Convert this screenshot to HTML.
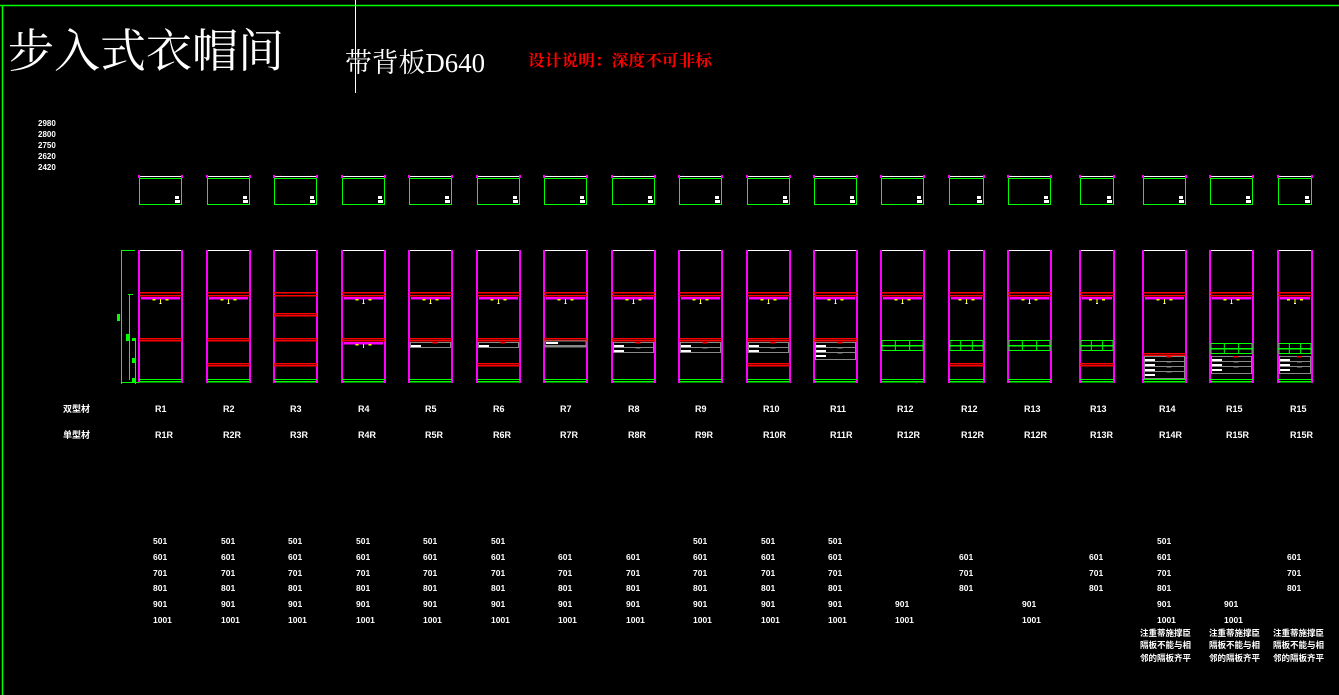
<!DOCTYPE html>
<html><head><meta charset="utf-8">
<style>
html,body{margin:0;padding:0;background:#000;width:1339px;height:695px;overflow:hidden}
svg{display:block}
.t{fill:#fff;font-family:"Liberation Sans","Noto Sans CJK SC",sans-serif;font-size:9px;font-weight:bold}
</style></head><body>
<svg id="s" width="1339" height="695" xmlns="http://www.w3.org/2000/svg">
<rect width="1339" height="695" fill="#000"/>
<line x1="0" y1="5.5" x2="1339" y2="5.5" stroke="#0f0" stroke-width="1.5"/>
<line x1="2.5" y1="5" x2="2.5" y2="695" stroke="#0f0" stroke-width="1.5"/>
<line x1="355.5" y1="0" x2="355.5" y2="93" stroke="#fff" stroke-width="1"/>
<text x="8" y="67" fill="#fff" font-family="'Noto Serif CJK SC',serif" font-size="46" textLength="276" lengthAdjust="spacingAndGlyphs">步入式衣帽间</text>
<text x="345" y="72" fill="#fff" font-family="'Liberation Serif','Noto Serif CJK SC',serif" font-size="27" textLength="140" lengthAdjust="spacingAndGlyphs">带背板D640</text>
<text x="528" y="66" fill="#f00" font-family="'Liberation Serif','Noto Serif CJK SC',serif" font-size="16" font-weight="bold" textLength="184" lengthAdjust="spacingAndGlyphs">设计说明：深度不可非标</text>
<g class="t" style="font-size:8px">
<text x="38" y="126">2980</text><text x="38" y="137">2800</text><text x="38" y="148">2750</text><text x="38" y="159">2620</text><text x="38" y="170">2420</text>
</g>
<g id="g"></g>
<g class="t">
<text x="63" y="412">双型材</text><text x="63" y="438">单型材</text>
<text x="155" y="412">R1</text><text x="223" y="412">R2</text><text x="290" y="412">R3</text><text x="358" y="412">R4</text><text x="425" y="412">R5</text><text x="493" y="412">R6</text><text x="560" y="412">R7</text><text x="628" y="412">R8</text><text x="695" y="412">R9</text><text x="763" y="412">R10</text><text x="830" y="412">R11</text><text x="897" y="412">R12</text><text x="961" y="412">R12</text><text x="1024" y="412">R13</text><text x="1090" y="412">R13</text><text x="1159" y="412">R14</text><text x="1226" y="412">R15</text><text x="1290" y="412">R15</text>
<text x="155" y="438">R1R</text><text x="223" y="438">R2R</text><text x="290" y="438">R3R</text><text x="358" y="438">R4R</text><text x="425" y="438">R5R</text><text x="493" y="438">R6R</text><text x="560" y="438">R7R</text><text x="628" y="438">R8R</text><text x="695" y="438">R9R</text><text x="763" y="438">R10R</text><text x="830" y="438">R11R</text><text x="897" y="438">R12R</text><text x="961" y="438">R12R</text><text x="1024" y="438">R12R</text><text x="1090" y="438">R13R</text><text x="1159" y="438">R14R</text><text x="1226" y="438">R15R</text><text x="1290" y="438">R15R</text>
</g>
<g class="t" style="font-size:8.5px">
<text x="153" y="544">501</text><text x="153" y="560">601</text><text x="153" y="576">701</text><text x="153" y="591">801</text><text x="153" y="607">901</text><text x="153" y="623">1001</text>
<text x="221" y="544">501</text><text x="221" y="560">601</text><text x="221" y="576">701</text><text x="221" y="591">801</text><text x="221" y="607">901</text><text x="221" y="623">1001</text>
<text x="288" y="544">501</text><text x="288" y="560">601</text><text x="288" y="576">701</text><text x="288" y="591">801</text><text x="288" y="607">901</text><text x="288" y="623">1001</text>
<text x="356" y="544">501</text><text x="356" y="560">601</text><text x="356" y="576">701</text><text x="356" y="591">801</text><text x="356" y="607">901</text><text x="356" y="623">1001</text>
<text x="423" y="544">501</text><text x="423" y="560">601</text><text x="423" y="576">701</text><text x="423" y="591">801</text><text x="423" y="607">901</text><text x="423" y="623">1001</text>
<text x="491" y="544">501</text><text x="491" y="560">601</text><text x="491" y="576">701</text><text x="491" y="591">801</text><text x="491" y="607">901</text><text x="491" y="623">1001</text>
<text x="558" y="560">601</text><text x="558" y="576">701</text><text x="558" y="591">801</text><text x="558" y="607">901</text><text x="558" y="623">1001</text>
<text x="626" y="560">601</text><text x="626" y="576">701</text><text x="626" y="591">801</text><text x="626" y="607">901</text><text x="626" y="623">1001</text>
<text x="693" y="544">501</text><text x="693" y="560">601</text><text x="693" y="576">701</text><text x="693" y="591">801</text><text x="693" y="607">901</text><text x="693" y="623">1001</text>
<text x="761" y="544">501</text><text x="761" y="560">601</text><text x="761" y="576">701</text><text x="761" y="591">801</text><text x="761" y="607">901</text><text x="761" y="623">1001</text>
<text x="828" y="544">501</text><text x="828" y="560">601</text><text x="828" y="576">701</text><text x="828" y="591">801</text><text x="828" y="607">901</text><text x="828" y="623">1001</text>
<text x="895" y="607">901</text><text x="895" y="623">1001</text>
<text x="959" y="560">601</text><text x="959" y="576">701</text><text x="959" y="591">801</text>
<text x="1022" y="607">901</text><text x="1022" y="623">1001</text>
<text x="1089" y="560">601</text><text x="1089" y="576">701</text><text x="1089" y="591">801</text>
<text x="1157" y="544">501</text><text x="1157" y="560">601</text><text x="1157" y="576">701</text><text x="1157" y="591">801</text><text x="1157" y="607">901</text><text x="1157" y="623">1001</text>
<text x="1224" y="607">901</text><text x="1224" y="623">1001</text>
<text x="1287" y="560">601</text><text x="1287" y="576">701</text><text x="1287" y="591">801</text>
</g>
<g class="t" style="font-size:8.5px">
<text x="1140" y="636">注重蒂施撑臣</text><text x="1140" y="648">隔板不能与相</text><text x="1140" y="661">邻的隔板齐平</text>
<text x="1209" y="636">注重蒂施撑臣</text><text x="1209" y="648">隔板不能与相</text><text x="1209" y="661">邻的隔板齐平</text>
<text x="1273" y="636">注重蒂施撑臣</text><text x="1273" y="648">隔板不能与相</text><text x="1273" y="661">邻的隔板齐平</text>
</g>
</svg>
<script>
var g=document.getElementById('g'),o='';
function L(x1,y1,x2,y2,c,w){o+='<line x1="'+x1+'" y1="'+y1+'" x2="'+x2+'" y2="'+y2+'" stroke="'+c+'" stroke-width="'+(w||1)+'"/>';}
function R(x,y,w,h,c){o+='<rect x="'+x+'" y="'+y+'" width="'+w+'" height="'+h+'" fill="'+c+'"/>';}
var cols=[[139,182],[207,250],[274,317],[342,385],[409,452],[477,520],[544,587],[612,655],[679,722],[747,790],[814,857],[881,924],[949,984],[1008,1051],[1080,1114],[1143,1186],[1210,1253],[1278,1312]];
var spec=[
{s:[339]},{s:[339,364]},{nohang:1,s:[314,339,364]},{s:[339],h2:1},
{s:[339],d:[342,1]},{s:[339,364],d:[342,1]},{s:[339],w7:1},{s:[339],d:[342,2]},
{s:[339],d:[342,2]},{s:[339,364],d:[342,2]},{s:[339],d:[342,3]},
{s:[],gr:340},{s:[364],gr:340},{s:[],gr:340},{s:[364],gr:340},
{s:[354],d:[356,4]},{s:[],gr:343,d:[356,3]},{s:[],gr:343,d:[356,3]}];
cols.forEach(function(c,i){
 var a=c[0],b=c[1],w=b-a,sp=spec[i];
 R(a,176,w,1,'#fff');R(a-1,175,2,3,'#f0f');R(b-1,175,2,3,'#f0f');
 o+='<rect x="'+(a+0.5)+'" y="178.5" width="'+(w-1)+'" height="26" fill="none" stroke="#0f0"/>';
 R(b-7,196,4,3,'#fff');R(b-7,200,5,3,'#fff');
 R(a,250,w,1,'#fff');
 R(a-1,250,2,133,'#f0f');R(b-1,250,2,133,'#f0f');
 R(a,379,w,1,'#0f0');R(a+1,381,w-2,1.5,'#0f0');
 R(a,292,w,1.5,'#f00');R(a,295,w,1.5,'#f00');
 if(!sp.nohang){R(a+2,297,w-4,2.5,'#f0f');R(a+w/2-0.5,299,1,4,'#ff0');R(a+w/2-8,299,3,1.5,'#ff0');R(a+w/2+5,299,3,1.5,'#ff0');R(a+w/2-1,303,2,1,'#fff');}
 sp.s.forEach(function(y){R(a,y-1,w,1.5,'#f00');R(a,y+1,w,1.5,'#f00');});
 if(sp.h2){R(a+2,342,w-4,2.5,'#f0f');R(a+w/2-0.5,344,1,4,'#ff0');R(a+w/2-8,344,3,1.5,'#ff0');R(a+w/2+5,344,3,1.5,'#ff0');}
 if(sp.w7){o+='<rect x="'+(a+1)+'" y="341" width="'+(w-2)+'" height="6" fill="none" stroke="#888"/>';R(a+2,342,12,2,'#fff');R(a+1,345,w-2,2,'#888');}
 if(sp.d){var y=sp.d[0];for(var k=0;k<sp.d[1];k++){var hh=(k==sp.d[1]-1&&sp.d[1]>=3)?7:5;o+='<rect x="'+(a+1.5)+'" y="'+(y+0.5)+'" width="'+(w-3)+'" height="'+hh+'" fill="none" stroke="#888"/>';R(a+2,y+3,10,2,'#fff');R(a+w/2+2,y,5,1.5,k==0?'#f00':'#888');y+=hh;}}
 if(sp.gr){var y=sp.gr;o+='<rect x="'+(a+1)+'" y="'+(y+0.5)+'" width="'+(w-2)+'" height="10" fill="none" stroke="#0f0"/>';R(a,y+5,w,1.5,'#0f0');L(a+w/3,y,a+w/3,y+11,'#0f0');L(a+2*w/3,y,a+2*w/3,y+11,'#0f0');}
});
L(121.5,250,121.5,384,'#0f0');L(121,250.5,135,250.5,'#0f0');L(121,382.5,139,382.5,'#0f0');
R(117,314,3,7,'#0f0');L(129.5,294,129.5,380,'#0f0');L(128,294.5,133,294.5,'#0f0');
R(126,334,3,7,'#0f0');L(135.5,338,135.5,384,'#0f0');R(132,338,4,3,'#0f0');R(132,358,4,5,'#0f0');R(132,378,4,4,'#0f0');
g.innerHTML=o;
</script>
</body></html>
